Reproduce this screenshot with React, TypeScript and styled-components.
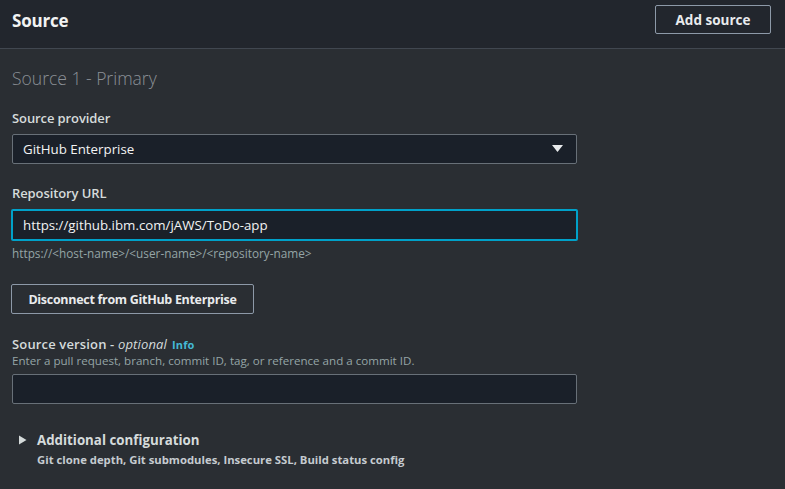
import React from "react";
import styled, { createGlobalStyle } from "styled-components";

const Global = createGlobalStyle`
  html, body { margin: 0; padding: 0; background: #2a2e33; }
  body { font-family: "Open Sans", "Noto Sans", sans-serif; -webkit-font-smoothing: antialiased; }
  * { box-sizing: border-box; }
`;

const Page = styled.div`
  width: 785px;
  height: 489px;
  background: #2a2e33;
  overflow: hidden;
  color: #d5dbdb;
`;

const Header = styled.header`
  height: 49px;
  background: #22262d;
  border-bottom: 1px solid #414750;
  display: flex;
  align-items: flex-start;
  justify-content: space-between;
  padding: 5px 14px 0 12px;
`;

const Title = styled.h2`
  margin: 4px 0 0;
  font-size: 17px;
  font-weight: 700;
  color: #f2f3f3;
  letter-spacing: -0.2px;
`;

const Button = styled.button<{ $w?: number; $tight?: boolean }>`
  height: ${(p) => (p.$tight ? 30 : 29)}px;
  width: ${(p) => (p.$w ? `${p.$w}px` : "auto")};
  padding: 0;
  white-space: nowrap;
  background: transparent;
  border: 1px solid #8d99a8;
  border-radius: 2px;
  color: #e9ebed;
  font-family: inherit;
  font-size: ${(p) => (p.$tight ? 12.5 : 13.5)}px;
  letter-spacing: ${(p) => (p.$tight ? -0.3 : 0)}px;
  font-weight: 700;
  display: flex;
  align-items: center;
  justify-content: center;
`;

const Body = styled.div`
  padding: 17px 0 0 11px;
  display: flex;
  flex-direction: column;
`;

const Subtitle = styled.div`
  font-size: 17.5px;
  font-weight: 300;
  color: #8b9096;
  margin-left: 1px;
  line-height: 24px;
`;

const Field = styled.div<{ $mt: number }>`
  margin-top: ${(p) => p.$mt}px;
  display: flex;
  flex-direction: column;
`;

const Label = styled.div<{ $loose?: boolean }>`
  font-size: 13px;
  font-weight: 600;
  color: #d5dbdb;
  line-height: 18px;
  margin-left: 1px;
  display: flex;
  align-items: baseline;
  gap: 5px;
  letter-spacing: ${(p) => (p.$loose ? 0.15 : -0.1)}px;
`;

const Italic = styled.span`
  font-style: italic;
  font-weight: 400;
`;

const InfoLink = styled.span`
  color: #44b9d6;
  font-size: 11px;
  font-weight: 700;
`;

const Description = styled.div`
  font-size: 11.6px;
  color: #95a5a6;
  line-height: 15px;
  margin-left: 1px;
  margin-top: -1px;
`;

const Box = styled.div<{ $focus?: boolean; $mt?: number }>`
  margin-top: ${(p) => p.$mt ?? 7}px;
  width: ${(p) => (p.$focus ? 567 : 565)}px;
  margin-left: ${(p) => (p.$focus ? 0 : 1)}px;
  height: ${(p) => (p.$focus ? 32 : 30)}px;
  background: #1a2029;
  border: ${(p) => (p.$focus ? "2px solid #00a1c9" : "1px solid #687078")};
  border-radius: 2px;
  display: flex;
  align-items: center;
  justify-content: space-between;
  padding: 0 13px 0 10px;
  font-size: 13.3px;
  color: #f2f3f3;
`;

const Caret = styled.svg<{ $w: number; $h: number }>`
  width: ${(p) => p.$w}px;
  height: ${(p) => p.$h}px;
`;

const Hint = styled.div`
  font-size: 11.8px;
  color: #95a5a6;
  margin-top: 5px;
  line-height: 14px;
  margin-left: 1px;
`;

const ButtonRow = styled.div`
  margin-top: 24px;
  display: flex;
`;

const Expander = styled.div`
  margin-top: 27px;
  display: grid;
  grid-template-columns: 18px auto;
  align-items: center;
  padding-left: 8px;
`;

const ExpandTitle = styled.div`
  font-size: 13.3px;
  font-weight: 700;
  color: #d5dbdb;
  line-height: 18px;
`;

const ExpandDesc = styled.div`
  grid-column: 2;
  font-size: 11.3px;
  font-weight: 700;
  color: #c5cbd0;
  margin-top: 3px;
`;

export default function App() {
  return (
    <Page>
      <Global />
      <Header>
        <Title>Source</Title>
        <Button $w={116}>Add source</Button>
      </Header>
      <Body>
        <Subtitle>Source 1 - Primary</Subtitle>
        <Field $mt={19}>
          <Label>Source provider</Label>
          <Box>
            <span>GitHub Enterprise</span>
            <Caret $w={11} $h={8} viewBox="0 0 11 8">
              <path d="M0 0 H11 L5.5 7 Z" fill="#e9ebed" />
            </Caret>
          </Box>
        </Field>
        <Field $mt={20}>
          <Label>Repository URL</Label>
          <Box $focus>
            <span>https://github.ibm.com/jAWS/ToDo-app</span>
          </Box>
          <Hint>https://&lt;host-name&gt;/&lt;user-name&gt;/&lt;repository-name&gt;</Hint>
        </Field>
        <ButtonRow>
          <Button $w={243} $tight>Disconnect from GitHub Enterprise</Button>
        </ButtonRow>
        <Field $mt={21}>
          <Label $loose>
            <span>
              Source version - <Italic>optional</Italic>
            </span>
            <InfoLink>Info</InfoLink>
          </Label>
          <Description>Enter a pull request, branch, commit ID, tag, or reference and a commit ID.</Description>
          <Box $mt={6} />
        </Field>
        <Expander>
          <Caret $w={8} $h={10} viewBox="0 0 8 10">
            <path d="M0 0.5 L7.5 5 L0 9.5 Z" fill="#d5dbdb" />
          </Caret>
          <ExpandTitle>Additional configuration</ExpandTitle>
          <ExpandDesc>Git clone depth, Git submodules, Insecure SSL, Build status config</ExpandDesc>
        </Expander>
      </Body>
    </Page>
  );
}
